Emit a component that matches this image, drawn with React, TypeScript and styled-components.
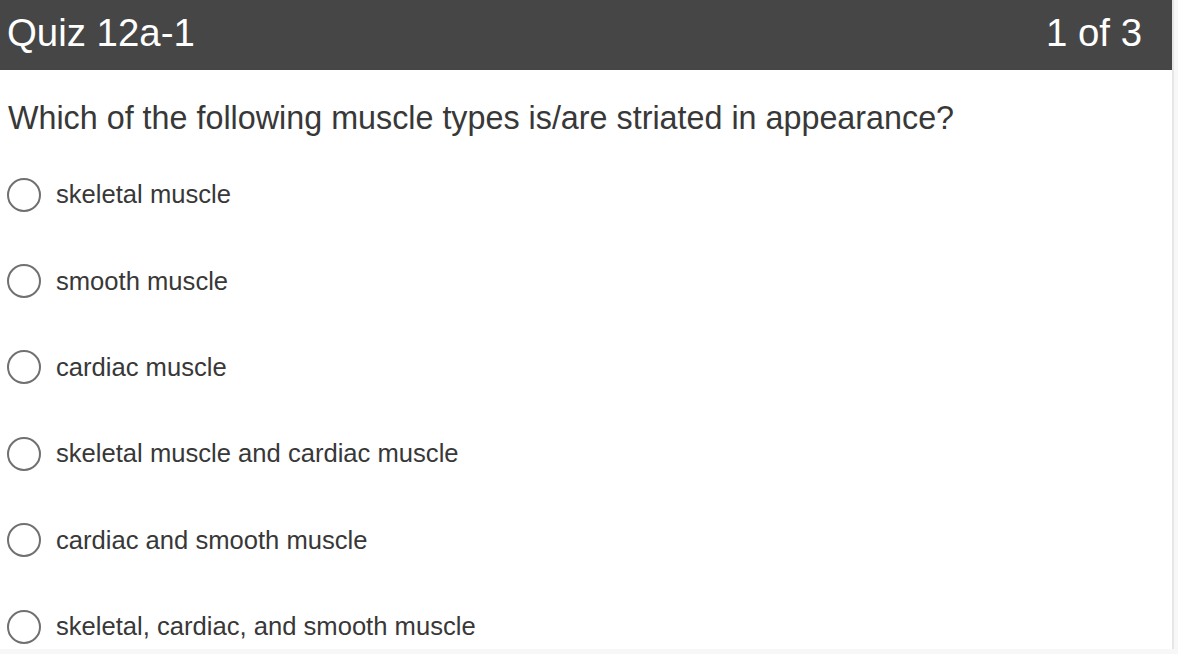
import React from "react";
import styled, { createGlobalStyle } from "styled-components";

const Global = createGlobalStyle`
  html, body { margin: 0; padding: 0; background: #f7f7f7; }
  body { font-family: "Liberation Sans", Arial, Helvetica, sans-serif; }
  * { box-sizing: border-box; }
`;

const Panel = styled.div`
  width: 1174px;
  height: 649px;
  overflow: hidden;
  background: #ffffff;
  border-right: 2px solid #e6e6e6;
  display: flex;
  flex-direction: column;
`;

const Header = styled.header`
  height: 70px;
  flex: none;
  background: #464646;
  color: #ffffff;
  display: flex;
  align-items: center;
  justify-content: space-between;
  padding: 0 30px 3px 7px;
  font-size: 38.4px;
  line-height: 1;
`;

const Title = styled.h1`
  margin: 0;
  font-size: inherit;
  font-weight: 400;
`;

const Counter = styled.span`
  font-weight: 400;
`;

const Body = styled.main`
  padding: 29px 0 0 8px;
  color: #383838;
`;

const Question = styled.p`
  margin: 0 0 14px;
  font-size: 32.3px;
  line-height: 38.4px;
`;

const Options = styled.div`
  display: flex;
  flex-direction: column;
`;

const Option = styled.label`
  height: 86.4px;
  display: flex;
  align-items: center;
  gap: 15px;
  font-size: 25.6px;
  line-height: 1.2;
  cursor: pointer;
`;

const Radio = styled.span`
  width: 34px;
  height: 34px;
  flex: none;
  border-radius: 50%;
  border: 2px solid #707070;
  background: #fff;
  margin-left: -1px;
`;

const choices = [
  "skeletal muscle",
  "smooth muscle",
  "cardiac muscle",
  "skeletal muscle and cardiac muscle",
  "cardiac and smooth muscle",
  "skeletal, cardiac, and smooth muscle",
];

export default function App() {
  return (
    <>
      <Global />
      <Panel>
        <Header>
          <Title>Quiz 12a-1</Title>
          <Counter>1 of 3</Counter>
        </Header>
        <Body>
          <Question>Which of the following muscle types is/are striated in appearance?</Question>
          <Options>
            {choices.map((c) => (
              <Option key={c}>
                <Radio />
                {c}
              </Option>
            ))}
          </Options>
        </Body>
      </Panel>
    </>
  );
}
